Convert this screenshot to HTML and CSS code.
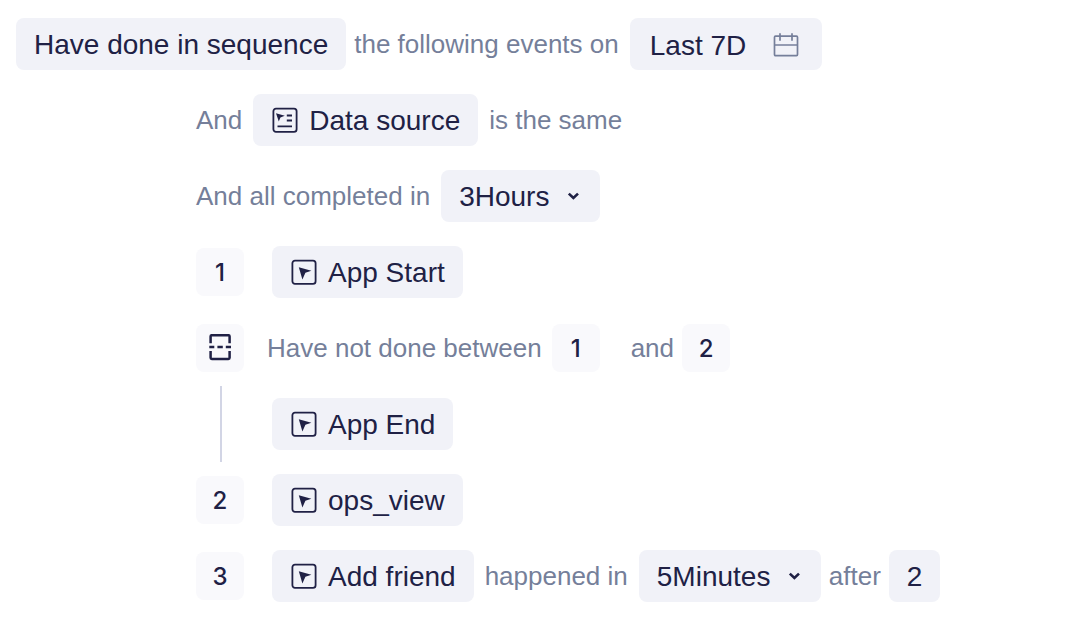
FILE: index.html
```html
<!DOCTYPE html>
<html lang="en">
  <head>
    <meta charset="UTF-8" />
    <meta name="viewport" content="width=device-width, initial-scale=1.0" />
    <title>Event Sequence</title>
    <link rel="stylesheet" href="styles.css">
  </head>
  <body>
    <svg class="sprite" aria-hidden="true">
      <symbol id="icon-event" viewBox="0 0 28 28">
        <rect x="2.4" y="1.6" width="23.2" height="23.2" rx="2.6" fill="none" stroke="currentColor" stroke-width="1.8" />
        <path d="M8.8 8.2l12.6 3.6-6 2-3 6.6z" fill="currentColor" />
      </symbol>
      <symbol id="icon-chevron" viewBox="0 0 16 16">
        <path d="M2.8 5.6l4.6 4.4 4.6-4.4" fill="none" stroke="currentColor" stroke-width="2.6" />
      </symbol>
    </svg>
    <form class="sequence">
      <div class="row">
        <button type="button" class="chip">Have done in sequence</button>
        <span class="text text-before">the following events on</span>
        <button type="button" class="chip date">
          <span class="date-value">Last 7D</span>
          <svg class="icon" viewBox="0 0 28 28" fill="none" stroke="currentColor" stroke-width="1.7">
            <rect x="2.5" y="6.2" width="23" height="19.4" rx="1" />
            <path d="M2.5 15h23M8 3.3v7.4M20 3.3v7.4" />
          </svg>
        </button>
      </div>
      <div class="rules">
        <div class="row">
          <span class="text text-before">And</span>
          <button type="button" class="chip">
            <svg class="icon" viewBox="0 0 28 28">
              <rect x="2.4" y="1.6" width="23.2" height="23.2" rx="2.6" fill="none" stroke="currentColor" stroke-width="1.8" />
              <path d="M5 6.2l8.8 2.6-4.4 1.6-1.6 4z" fill="currentColor" />
              <path d="M15.8 8.5H21M15.8 13.5H21M6.5 19.3H21" fill="none" stroke="currentColor" stroke-width="1.8" />
            </svg>
            Data source
          </button>
          <span class="text text-after">is the same</span>
        </div>
        <div class="row">
          <label class="text text-before" for="window">And all completed in</label>
          <span class="select">
            <select id="window" class="chip">
              <option>3Hours</option>
            </select>
            <svg class="chevron"><use href="#icon-chevron" /></svg>
          </span>
        </div>
        <div class="row">
          <span class="badge step">1</span>
          <button type="button" class="chip"><svg class="icon"><use href="#icon-event" /></svg>App Start</button>
        </div>
        <div class="row">
          <button type="button" class="badge" aria-label="Between steps">
            <svg class="icon" viewBox="0 0 28 28" fill="none" stroke="currentColor" stroke-width="2.5">
              <path d="M4.6 9.2V2.4a1.2 1.2 0 0 1 1.2-1.2h16.6a1.2 1.2 0 0 1 1.2 1.2v6.8M4.6 17v6.8a1.2 1.2 0 0 0 1.2 1.2h16.6a1.2 1.2 0 0 0 1.2-1.2V17" />
              <path d="M3.3 13.1h5M11.4 13.1h5.4M19.8 13.1h5.2" />
            </svg>
          </button>
          <span class="text text-between">Have not done between</span>
          <button type="button" class="badge">1</button>
          <span class="text text-and">and</span>
          <button type="button" class="badge">2</button>
        </div>
        <div class="row">
          <span class="line"></span>
          <button type="button" class="chip"><svg class="icon"><use href="#icon-event" /></svg>App End</button>
        </div>
        <div class="row">
          <span class="badge step">2</span>
          <button type="button" class="chip"><svg class="icon"><use href="#icon-event" /></svg>ops_view</button>
        </div>
        <div class="row">
          <span class="badge step">3</span>
          <button type="button" class="chip"><svg class="icon"><use href="#icon-event" /></svg>Add friend</button>
          <label class="text text-after" for="delay">happened in</label>
          <span class="select">
            <select id="delay" class="chip">
              <option>5Minutes</option>
            </select>
            <svg class="chevron"><use href="#icon-chevron" /></svg>
          </span>
          <span class="text">after</span>
          <button type="button" class="chip">2</button>
        </div>
      </div>
    </form>
  </body>
</html>
```

FILE: styles.css
```css
* {
  margin: 0;
  padding: 0;
  box-sizing: border-box;
}
body {
  background: #ffffff;
  color: #202145;
  font-family: "Liberation Sans", Arial, Helvetica, sans-serif;
}
.sprite {
  display: none;
}
.sequence {
  padding: 6px 16px;
}
.rules {
  padding-left: 180px;
}
.row {
  display: flex;
  align-items: center;
  gap: 8px;
  min-height: 76px;
  white-space: nowrap;
}
.chip,
.badge {
  display: flex;
  align-items: center;
  border: 0;
  border-radius: 8px;
  color: #202145;
  cursor: pointer;
}
.chip {
  gap: 10px;
  height: 52px;
  padding: 1px 18px 0;
  background: #f1f2f8;
  font-family: inherit;
  font-size: 28px;
  line-height: 32px;
}
.badge {
  justify-content: center;
  flex: none;
  width: 48px;
  height: 48px;
  background: #f9f9fc;
  font-family: Inter, "Liberation Sans", sans-serif;
  font-size: 24px;
  font-weight: 500;
}
.step {
  margin-right: 20px;
  cursor: default;
}
.icon {
  flex: none;
  width: 28px;
  height: 28px;
}
.text {
  color: #757f9a;
  font-size: 26px;
  line-height: 32px;
}
.text-before {
  padding-right: 3px;
}
.text-after {
  padding: 0 3px;
}
.text-between {
  padding: 0 2px 0 15px;
}
.text-and {
  padding-left: 23px;
}
.date {
  gap: 26px;
  padding: 0 22px 0 20px;
}
.date-value {
  padding-top: 4px;
}
.date .icon {
  color: #757f9a;
}
.select {
  position: relative;
}
.select select {
  appearance: none;
  padding-right: 50px;
}
.chevron {
  position: absolute;
  top: 18px;
  right: 18px;
  width: 16px;
  height: 16px;
  pointer-events: none;
}
.line {
  align-self: stretch;
  width: 2px;
  margin: 0 42px 0 24px;
  background: #d2d5e5;
}
```
